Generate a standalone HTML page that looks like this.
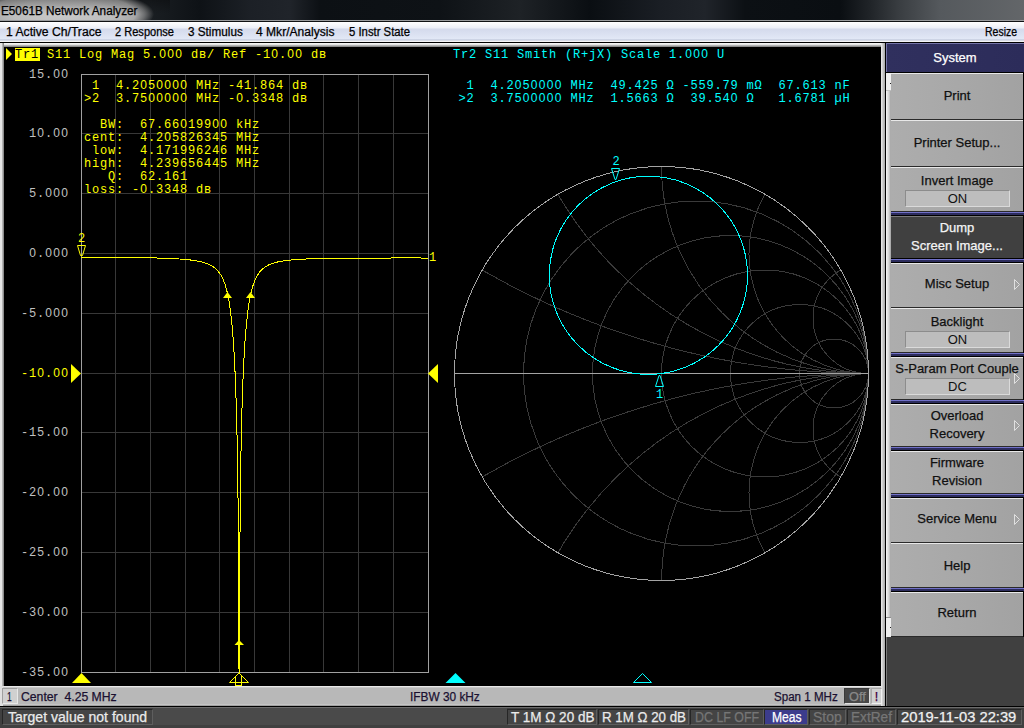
<!DOCTYPE html>
<html><head><meta charset="utf-8">
<style>
*{box-sizing:border-box}
html,body{margin:0;padding:0}
body{width:1024px;height:728px;overflow:hidden;position:relative;background:#000;font-family:"Liberation Sans",sans-serif}
.a{position:absolute}
.t{position:absolute;white-space:nowrap;transform-origin:0 0;-webkit-text-stroke:0.25px currentColor}
#title{left:0;top:0;width:1024px;height:20px;background:linear-gradient(90deg,#1a1e22 150px,#0e1216 200px,#1c2026 250px,#20242a 290px,#0c1014 320px,#0e1216 440px,#1e2226 520px,#0a0e12 590px,#1a1e24 660px,#20242a 705px,#0c1014 745px,#0a0e12 840px,#202428 870px,#3a3e42 900px,#55595d 940px,#636669 1024px)}
#glow{left:0;top:0;width:170px;height:20px;background:linear-gradient(rgba(0,0,0,0.28),rgba(0,0,0,0.05) 55%,rgba(0,0,0,0) 70%),radial-gradient(ellipse 92px 26px at 62px 14px,#cacaca 0%,#bdbdbd 55%,#a8a8a8 80%,rgba(160,160,160,0.6) 90%,rgba(26,30,34,0) 100%)}
#tline{left:0;top:20px;width:1024px;height:2px;background:#9a9c9e;border-bottom:1px solid #101214}
#menu{left:0;top:22px;width:1024px;height:20px;background:linear-gradient(#ffffff 0px,#eceff7 6px,#d4daec 7px,#e2e8f6 17px,#b8c0d4 18px,#f4f4f6 19px)}
#mline{left:0;top:42px;width:1024px;height:1px;background:#000}
#frame{left:0;top:43px;width:885px;height:663px;background:linear-gradient(90deg,#e6e6e6 2px,#b4b4b4 2px,#b4b4b4 3px,#8c8c8c 3px,#8c8c8c 4px,rgba(0,0,0,0) 4px,rgba(0,0,0,0) 881px,#f0f0f0 881px,#d8d8d8 882px,#a8a8a8 885px),linear-gradient(#f4f4f4 1px,#e4e4e4 1px,#e4e4e4 2px,#b4b4b4 2px,#b4b4b4 3px,#8c8c8c 3px,#8c8c8c 4px,#000 4px)}
#plot{left:4px;top:47px;width:877px;height:639px;background:#000}
#chs{left:0;top:686px;width:881px;height:20px;background:linear-gradient(#e8e8e8 1px,#c8c8c8 1px,#c8c8c8 2px,#b8b8b8 2px,#b8b8b8 18px,#c4c4c4 18px,#c4c4c4 19px,#a0a0a0 19px)}
#chsl{left:0;top:686px;width:3px;height:20px;background:#e0e0e0}
#rblack{left:885px;top:42px;width:1px;height:665px;background:#000}
#panel{left:886px;top:43px;width:138px;height:663px;background:#000}
#sys{left:886px;top:43px;width:138px;height:29px;background:linear-gradient(90deg,#30305e,#2c2c5a);border-top:1px solid #7474a8;border-left:1px solid #7474a8}
#strip{left:886px;top:73px;width:5px;height:564px;background:#efefef}
#thumb{left:886px;top:90px;width:5px;height:528px;background:linear-gradient(90deg,#f8f8f8,#d0d0d0 60%,#a0a0a0);border-top:1px solid #c0c0c0;border-bottom:1px solid #909090}
#pdark{left:886px;top:637px;width:138px;height:69px;background:#404040;border-left:1px solid #7a7a7a}
#sline{left:0;top:706px;width:1024px;height:1px;background:#000}
#status{left:0;top:707px;width:1024px;height:21px;background:#404040;border-top:1px solid #6c6c6c}
.m{font-family:"Liberation Mono",monospace;font-size:12px;letter-spacing:0.8px}
.z{font-family:"Liberation Sans",sans-serif;font-size:12px;letter-spacing:0}
.key{position:absolute;left:891px;width:132px;background:linear-gradient(90deg,#adadad,#a8a8a8 50%,#a2a2a2);border-top:1px solid #e8e8e8;border-bottom:1px solid #2a2a2a}
.key.dark{background:#404040;border-top:1px solid #7a7a7a;border-bottom:1px solid #000}
.kl{position:absolute;left:891px;width:132px;text-align:center;font-size:13px;line-height:15px;color:#101010;white-space:nowrap;-webkit-text-stroke:0.25px currentColor}
.kl.dk{color:#f4f4f4}
.val{position:absolute;left:905px;width:105px;height:17px;background:#bdbdbd;border:1px solid #8c8c8c;border-right-color:#dadada;border-bottom-color:#dadada;text-align:center;font-size:13px;line-height:15px;color:#101010}
.sep{position:absolute;left:891px;width:133px;height:3px;background:#2c2c5c;border-top:1px solid #7070c8}
.arr{position:absolute;left:1013px}
svg.p{position:absolute;left:0;top:0}
</style></head><body>
<div id="title" class="a"></div>
<div id="glow" class="a"></div>
<div id="tline" class="a"></div>
<div id="menu" class="a"></div>
<div id="mline" class="a"></div>
<div id="frame" class="a"></div>
<div id="plot" class="a"></div>
<div id="chs" class="a"></div>
<div id="chsl" class="a"></div>
<div id="rblack" class="a"></div>
<div id="panel" class="a"></div>
<div id="sys" class="a"></div>
<div class="t" style="left:886px;top:50px;width:138px;text-align:center;font-size:13px;line-height:15px;color:#fff">System</div>
<div id="strip" class="a"></div>
<div id="thumb" class="a"></div>
<div class="a" style="left:890px;top:83px;width:1px;height:1px;background:#202020"></div>
<div class="a" style="left:890px;top:627px;width:1px;height:1px;background:#202020"></div>
<div class="key" style="top:73px;height:47px"></div>
<div class="kl" style="top:88px">Print</div>
<div class="key" style="top:120px;height:47px"></div>
<div class="kl" style="top:135px">Printer Setup...</div>
<div class="key" style="top:167px;height:45px"></div>
<div class="kl" style="top:173px">Invert Image</div>
<div class="val" style="top:190px">ON</div>
<div class="key dark" style="top:216px;height:43px"></div>
<div class="sep" style="top:212px"></div>
<div class="kl dk" style="top:220px">Dump</div>
<div class="kl dk" style="top:238px">Screen Image...</div>
<div class="key" style="top:263px;height:45px"></div>
<div class="sep" style="top:259px"></div>
<div class="kl" style="top:276px">Misc Setup</div>
<svg class="arr" style="top:279px" width="8" height="12"><path d="M1.5 0.5L6.5 5.5L1.5 10.5Z" fill="none" stroke="#e0e0e0"/></svg>
<div class="key" style="top:308px;height:45px"></div>
<div class="kl" style="top:314px">Backlight</div>
<div class="val" style="top:331px">ON</div>
<div class="key" style="top:357px;height:43px"></div>
<div class="sep" style="top:353px"></div>
<div class="kl" style="top:361px">S-Param Port Couple</div>
<div class="val" style="top:378px">DC</div>
<svg class="arr" style="top:373px" width="8" height="12"><path d="M1.5 0.5L6.5 5.5L1.5 10.5Z" fill="none" stroke="#e0e0e0"/></svg>
<div class="key" style="top:404px;height:43px"></div>
<div class="sep" style="top:400px"></div>
<div class="kl" style="top:408px">Overload</div>
<div class="kl" style="top:426px">Recovery</div>
<svg class="arr" style="top:420px" width="8" height="12"><path d="M1.5 0.5L6.5 5.5L1.5 10.5Z" fill="none" stroke="#e0e0e0"/></svg>
<div class="key" style="top:451px;height:43px"></div>
<div class="sep" style="top:447px"></div>
<div class="kl" style="top:455px">Firmware</div>
<div class="kl" style="top:473px">Revision</div>
<div class="key" style="top:498px;height:45px"></div>
<div class="sep" style="top:494px"></div>
<div class="kl" style="top:511px">Service Menu</div>
<svg class="arr" style="top:514px" width="8" height="12"><path d="M1.5 0.5L6.5 5.5L1.5 10.5Z" fill="none" stroke="#e0e0e0"/></svg>
<div class="key" style="top:543px;height:45px"></div>
<div class="kl" style="top:558px">Help</div>
<div class="key" style="top:592px;height:45px"></div>
<div class="sep" style="top:588px"></div>
<div class="kl" style="top:605px">Return</div>
<div id="pdark" class="a"></div>
<div id="sline" class="a"></div>
<div id="status" class="a"></div>
<div class="a" style="left:153px;top:708px;width:354px;height:17px;background:#4a4a4a"></div>
<div class="a" style="left:2px;top:688px;width:16px;height:16px;background:#d0d0d0;border:1px solid #a0a0a0;border-right-color:#e8e8e8;border-bottom-color:#e8e8e8"></div>
<div class="a" style="left:844px;top:688px;width:26px;height:16px;background:#484848;border:1px solid #3a3a3a;border-right-color:#e0e0e0;border-bottom-color:#e0e0e0"></div>
<div class="a" style="left:871px;top:688px;width:11px;height:16px;background:#d0d0d0;border:1px solid #a8a8a8;border-right-color:#f0f0f0;border-bottom-color:#f0f0f0"></div>
<div class="a" style="left:2px;top:709px;width:151px;height:16px;background:#444;border:1px solid #262626;border-right-color:#5e5e5e;border-bottom-color:#5e5e5e"></div>
<div class="a" style="left:507px;top:709px;width:90px;height:16px;background:#444;border:1px solid #262626;border-right-color:#5e5e5e;border-bottom-color:#5e5e5e"></div>
<div class="a" style="left:598px;top:709px;width:91px;height:16px;background:#444;border:1px solid #262626;border-right-color:#5e5e5e;border-bottom-color:#5e5e5e"></div>
<div class="a" style="left:690px;top:709px;width:74px;height:16px;background:#444;border:1px solid #262626;border-right-color:#5e5e5e;border-bottom-color:#5e5e5e"></div>
<div class="a" style="left:764px;top:709px;width:44px;height:16px;background:#3c3c8c;border:1px solid #262626;border-right-color:#5e5e5e;border-bottom-color:#5e5e5e"></div>
<div class="a" style="left:809px;top:709px;width:37px;height:16px;background:#444;border:1px solid #262626;border-right-color:#5e5e5e;border-bottom-color:#5e5e5e"></div>
<div class="a" style="left:847px;top:709px;width:49px;height:16px;background:#444;border:1px solid #262626;border-right-color:#5e5e5e;border-bottom-color:#5e5e5e"></div>
<div class="a" style="left:897px;top:709px;width:125px;height:16px;background:#444;border:1px solid #262626;border-right-color:#5e5e5e;border-bottom-color:#5e5e5e"></div>
<div class="t" style="left:0.50px;top:4.29px;font-size:12px;line-height:14px;color:#000;transform:scaleX(0.9789);">E5061B Network Analyzer</div>
<div class="t" style="left:5.50px;top:25.29px;font-size:12px;line-height:14px;color:#000;transform:scaleX(1.0132);">1 Active Ch/Trace</div>
<div class="t" style="left:115.00px;top:25.29px;font-size:12px;line-height:14px;color:#000;transform:scaleX(0.9216);">2 Response</div>
<div class="t" style="left:188.00px;top:25.29px;font-size:12px;line-height:14px;color:#000;transform:scaleX(0.9779);">3 Stimulus</div>
<div class="t" style="left:256.00px;top:25.29px;font-size:12px;line-height:14px;color:#000;transform:scaleX(1.0051);">4 Mkr/Analysis</div>
<div class="t" style="left:349.00px;top:25.29px;font-size:12px;line-height:14px;color:#000;transform:scaleX(0.9431);">5 Instr State</div>
<div class="t" style="left:985.00px;top:25.29px;font-size:12px;line-height:14px;color:#000;transform:scaleX(0.8729);">Resize</div>
<div class="t" style="left:7.00px;top:689.97px;font-size:12.5px;line-height:15px;color:#1a1030;transform:scaleX(0.6775);">1</div>
<div class="t" style="left:21.10px;top:689.97px;font-size:12.5px;line-height:15px;color:#1a1030;transform:scaleX(0.9772);">Center  4.25 MHz</div>
<div class="t" style="left:410.30px;top:689.97px;font-size:12.5px;line-height:15px;color:#1a1030;transform:scaleX(0.9480);">IFBW 30 kHz</div>
<div class="t" style="left:774.30px;top:689.97px;font-size:12.5px;line-height:15px;color:#1a1030;transform:scaleX(0.9272);">Span 1 MHz</div>
<div class="t" style="left:848.60px;top:689.97px;font-size:12.5px;line-height:15px;color:#8a8a8a;transform:scaleX(1.0182);">Off</div>
<div class="t" style="left:874.50px;top:689.97px;font-size:12.5px;line-height:15px;color:#400040;transform:scaleX(0.7143);font-weight:bold;">!</div>
<div class="t" style="left:7.80px;top:708.50px;font-size:14px;line-height:17px;color:#eaeaea;transform:scaleX(1.0041);">Target value not found</div>
<div class="t" style="left:510.70px;top:708.50px;font-size:14px;line-height:17px;color:#eaeaea;transform:scaleX(0.9647);">T 1M Ω 20 dB</div>
<div class="t" style="left:601.60px;top:708.50px;font-size:14px;line-height:17px;color:#eaeaea;transform:scaleX(0.9505);">R 1M Ω 20 dB</div>
<div class="t" style="left:694.50px;top:708.50px;font-size:14px;line-height:17px;color:#767676;transform:scaleX(0.8878);">DC LF OFF</div>
<div class="t" style="left:771.60px;top:708.50px;font-size:14px;line-height:17px;color:#ffffff;transform:scaleX(0.8647);">Meas</div>
<div class="t" style="left:813.00px;top:708.50px;font-size:14px;line-height:17px;color:#767676;transform:scaleX(1.0010);">Stop</div>
<div class="t" style="left:851.00px;top:708.50px;font-size:14px;line-height:17px;color:#767676;transform:scaleX(0.9746);">ExtRef</div>
<div class="t" style="left:901.10px;top:708.50px;font-size:14px;line-height:17px;color:#f0f0f0;transform:scaleX(1.0532);">2019-11-03 22:39</div>
<svg class="p" width="1024" height="728" viewBox="0 0 1024 728">
<path d="M115.5 74V672M81 133.5H428M150.5 74V672M81 193.5H428M185.5 74V672M81 253.5H428M219.5 74V672M81 313.5H428M254.5 74V672M81 373.5H428M289.5 74V672M81 432.5H428M323.5 74V672M81 492.5H428M358.5 74V672M81 552.5H428M393.5 74V672M81 612.5H428" stroke="#383838" stroke-width="1" fill="none"/>
<rect x="81.5" y="74.5" width="347" height="598" stroke="#a0a0a0" fill="none"/>
<text y="78" fill="#c0c0c0" class="m" xml:space="preserve"><tspan x="29.00">15.</tspan><tspan class="z" x="53.30">0</tspan><tspan class="z" x="61.30">0</tspan></text>
<text y="137" fill="#c0c0c0" class="m" xml:space="preserve"><tspan x="29.00">1</tspan><tspan class="z" x="37.30">0</tspan><tspan x="45.00">.</tspan><tspan class="z" x="53.30">0</tspan><tspan class="z" x="61.30">0</tspan></text>
<text y="197" fill="#c0c0c0" class="m" xml:space="preserve"><tspan x="29.00">5.</tspan><tspan class="z" x="45.30">0</tspan><tspan class="z" x="53.30">0</tspan><tspan class="z" x="61.30">0</tspan></text>
<text y="257" fill="#c0c0c0" class="m" xml:space="preserve"><tspan class="z" x="29.30">0</tspan><tspan x="37.00">.</tspan><tspan class="z" x="45.30">0</tspan><tspan class="z" x="53.30">0</tspan><tspan class="z" x="61.30">0</tspan></text>
<text y="317" fill="#c0c0c0" class="m" xml:space="preserve"><tspan x="21.00">-5.</tspan><tspan class="z" x="45.30">0</tspan><tspan class="z" x="53.30">0</tspan><tspan class="z" x="61.30">0</tspan></text>
<text y="377" fill="#ffff00" class="m" xml:space="preserve"><tspan x="21.00">-1</tspan><tspan class="z" x="37.30">0</tspan><tspan x="45.00">.</tspan><tspan class="z" x="53.30">0</tspan><tspan class="z" x="61.30">0</tspan></text>
<text y="436" fill="#c0c0c0" class="m" xml:space="preserve"><tspan x="21.00">-15.</tspan><tspan class="z" x="53.30">0</tspan><tspan class="z" x="61.30">0</tspan></text>
<text y="496" fill="#c0c0c0" class="m" xml:space="preserve"><tspan x="21.00">-2</tspan><tspan class="z" x="37.30">0</tspan><tspan x="45.00">.</tspan><tspan class="z" x="53.30">0</tspan><tspan class="z" x="61.30">0</tspan></text>
<text y="556" fill="#c0c0c0" class="m" xml:space="preserve"><tspan x="21.00">-25.</tspan><tspan class="z" x="53.30">0</tspan><tspan class="z" x="61.30">0</tspan></text>
<text y="616" fill="#c0c0c0" class="m" xml:space="preserve"><tspan x="21.00">-3</tspan><tspan class="z" x="37.30">0</tspan><tspan x="45.00">.</tspan><tspan class="z" x="53.30">0</tspan><tspan class="z" x="61.30">0</tspan></text>
<text y="676" fill="#c0c0c0" class="m" xml:space="preserve"><tspan x="21.00">-35.</tspan><tspan class="z" x="53.30">0</tspan><tspan class="z" x="61.30">0</tspan></text>
<clipPath id="gc"><rect x="81" y="74" width="348" height="599"/></clipPath>
<path clip-path="url(#gc)" d="M81.00 257.01 L81.22 257.01 L81.43 257.01 L81.65 257.01 L81.87 257.01 L82.08 257.01 L82.30 257.02 L82.52 257.02 L82.73 257.02 L82.95 257.02 L83.17 257.02 L83.39 257.02 L83.60 257.02 L83.82 257.03 L84.04 257.03 L84.25 257.03 L84.47 257.03 L84.69 257.03 L84.90 257.03 L85.12 257.03 L85.34 257.04 L85.55 257.04 L85.77 257.04 L85.99 257.04 L86.21 257.04 L86.42 257.04 L86.64 257.05 L86.86 257.05 L87.07 257.05 L87.29 257.05 L87.51 257.05 L87.72 257.05 L87.94 257.05 L88.16 257.06 L88.37 257.06 L88.59 257.06 L88.81 257.06 L89.02 257.06 L89.24 257.06 L89.46 257.07 L89.67 257.07 L89.89 257.07 L90.11 257.07 L90.33 257.07 L90.54 257.07 L90.76 257.08 L90.98 257.08 L91.19 257.08 L91.41 257.08 L91.63 257.08 L91.84 257.08 L92.06 257.09 L92.28 257.09 L92.49 257.09 L92.71 257.09 L92.93 257.09 L93.15 257.09 L93.36 257.10 L93.58 257.10 L93.80 257.10 L94.01 257.10 L94.23 257.10 L94.45 257.10 L94.66 257.11 L94.88 257.11 L95.10 257.11 L95.31 257.11 L95.53 257.11 L95.75 257.11 L95.96 257.12 L96.18 257.12 L96.40 257.12 L96.61 257.12 L96.83 257.12 L97.05 257.12 L97.27 257.13 L97.48 257.13 L97.70 257.13 L97.92 257.13 L98.13 257.13 L98.35 257.13 L98.57 257.14 L98.78 257.14 L99.00 257.14 L99.22 257.14 L99.43 257.14 L99.65 257.15 L99.87 257.15 L100.09 257.15 L100.30 257.15 L100.52 257.15 L100.74 257.15 L100.95 257.16 L101.17 257.16 L101.39 257.16 L101.60 257.16 L101.82 257.16 L102.04 257.17 L102.25 257.17 L102.47 257.17 L102.69 257.17 L102.90 257.17 L103.12 257.18 L103.34 257.18 L103.55 257.18 L103.77 257.18 L103.99 257.18 L104.21 257.18 L104.42 257.19 L104.64 257.19 L104.86 257.19 L105.07 257.19 L105.29 257.19 L105.51 257.20 L105.72 257.20 L105.94 257.20 L106.16 257.20 L106.37 257.20 L106.59 257.21 L106.81 257.21 L107.03 257.21 L107.24 257.21 L107.46 257.21 L107.68 257.22 L107.89 257.22 L108.11 257.22 L108.33 257.22 L108.54 257.22 L108.76 257.23 L108.98 257.23 L109.19 257.23 L109.41 257.23 L109.63 257.24 L109.84 257.24 L110.06 257.24 L110.28 257.24 L110.49 257.24 L110.71 257.25 L110.93 257.25 L111.15 257.25 L111.36 257.25 L111.58 257.25 L111.80 257.26 L112.01 257.26 L112.23 257.26 L112.45 257.26 L112.66 257.27 L112.88 257.27 L113.10 257.27 L113.31 257.27 L113.53 257.27 L113.75 257.28 L113.97 257.28 L114.18 257.28 L114.40 257.28 L114.62 257.29 L114.83 257.29 L115.05 257.29 L115.27 257.29 L115.48 257.29 L115.70 257.30 L115.92 257.30 L116.13 257.30 L116.35 257.30 L116.57 257.31 L116.78 257.31 L117.00 257.31 L117.22 257.31 L117.44 257.32 L117.65 257.32 L117.87 257.32 L118.09 257.32 L118.30 257.33 L118.52 257.33 L118.74 257.33 L118.95 257.33 L119.17 257.34 L119.39 257.34 L119.60 257.34 L119.82 257.34 L120.04 257.35 L120.25 257.35 L120.47 257.35 L120.69 257.35 L120.91 257.36 L121.12 257.36 L121.34 257.36 L121.56 257.36 L121.77 257.37 L121.99 257.37 L122.21 257.37 L122.42 257.37 L122.64 257.38 L122.86 257.38 L123.07 257.38 L123.29 257.38 L123.51 257.39 L123.72 257.39 L123.94 257.39 L124.16 257.39 L124.38 257.40 L124.59 257.40 L124.81 257.40 L125.03 257.41 L125.24 257.41 L125.46 257.41 L125.68 257.41 L125.89 257.42 L126.11 257.42 L126.33 257.42 L126.54 257.42 L126.76 257.43 L126.98 257.43 L127.19 257.43 L127.41 257.44 L127.63 257.44 L127.84 257.44 L128.06 257.44 L128.28 257.45 L128.50 257.45 L128.71 257.45 L128.93 257.46 L129.15 257.46 L129.36 257.46 L129.58 257.47 L129.80 257.47 L130.01 257.47 L130.23 257.47 L130.45 257.48 L130.66 257.48 L130.88 257.48 L131.10 257.49 L131.31 257.49 L131.53 257.49 L131.75 257.50 L131.97 257.50 L132.18 257.50 L132.40 257.51 L132.62 257.51 L132.83 257.51 L133.05 257.52 L133.27 257.52 L133.48 257.52 L133.70 257.53 L133.92 257.53 L134.13 257.53 L134.35 257.54 L134.57 257.54 L134.78 257.54 L135.00 257.55 L135.22 257.55 L135.44 257.55 L135.65 257.56 L135.87 257.56 L136.09 257.56 L136.30 257.57 L136.52 257.57 L136.74 257.57 L136.95 257.58 L137.17 257.58 L137.39 257.58 L137.60 257.59 L137.82 257.59 L138.04 257.59 L138.25 257.60 L138.47 257.60 L138.69 257.61 L138.91 257.61 L139.12 257.61 L139.34 257.62 L139.56 257.62 L139.77 257.62 L139.99 257.63 L140.21 257.63 L140.42 257.64 L140.64 257.64 L140.86 257.64 L141.07 257.65 L141.29 257.65 L141.51 257.66 L141.72 257.66 L141.94 257.66 L142.16 257.67 L142.38 257.67 L142.59 257.68 L142.81 257.68 L143.03 257.68 L143.24 257.69 L143.46 257.69 L143.68 257.70 L143.89 257.70 L144.11 257.71 L144.33 257.71 L144.54 257.71 L144.76 257.72 L144.98 257.72 L145.20 257.73 L145.41 257.73 L145.63 257.74 L145.85 257.74 L146.06 257.74 L146.28 257.75 L146.50 257.75 L146.71 257.76 L146.93 257.76 L147.15 257.77 L147.36 257.77 L147.58 257.78 L147.80 257.78 L148.01 257.79 L148.23 257.79 L148.45 257.80 L148.66 257.80 L148.88 257.80 L149.10 257.81 L149.32 257.81 L149.53 257.82 L149.75 257.82 L149.97 257.83 L150.18 257.83 L150.40 257.84 L150.62 257.84 L150.83 257.85 L151.05 257.85 L151.27 257.86 L151.48 257.87 L151.70 257.87 L151.92 257.88 L152.14 257.88 L152.35 257.89 L152.57 257.89 L152.79 257.90 L153.00 257.90 L153.22 257.91 L153.44 257.91 L153.65 257.92 L153.87 257.92 L154.09 257.93 L154.30 257.94 L154.52 257.94 L154.74 257.95 L154.95 257.95 L155.17 257.96 L155.39 257.96 L155.60 257.97 L155.82 257.98 L156.04 257.98 L156.26 257.99 L156.47 257.99 L156.69 258.00 L156.91 258.01 L157.12 258.01 L157.34 258.02 L157.56 258.03 L157.77 258.03 L157.99 258.04 L158.21 258.04 L158.42 258.05 L158.64 258.06 L158.86 258.06 L159.08 258.07 L159.29 258.08 L159.51 258.08 L159.73 258.09 L159.94 258.10 L160.16 258.10 L160.38 258.11 L160.59 258.12 L160.81 258.12 L161.03 258.13 L161.24 258.14 L161.46 258.15 L161.68 258.15 L161.89 258.16 L162.11 258.17 L162.33 258.18 L162.54 258.18 L162.76 258.19 L162.98 258.20 L163.20 258.21 L163.41 258.21 L163.63 258.22 L163.85 258.23 L164.06 258.24 L164.28 258.24 L164.50 258.25 L164.71 258.26 L164.93 258.27 L165.15 258.28 L165.36 258.28 L165.58 258.29 L165.80 258.30 L166.02 258.31 L166.23 258.32 L166.45 258.33 L166.67 258.34 L166.88 258.34 L167.10 258.35 L167.32 258.36 L167.53 258.37 L167.75 258.38 L167.97 258.39 L168.18 258.40 L168.40 258.41 L168.62 258.42 L168.83 258.43 L169.05 258.43 L169.27 258.44 L169.48 258.45 L169.70 258.46 L169.92 258.47 L170.14 258.48 L170.35 258.49 L170.57 258.50 L170.79 258.51 L171.00 258.52 L171.22 258.53 L171.44 258.54 L171.65 258.55 L171.87 258.56 L172.09 258.58 L172.30 258.59 L172.52 258.60 L172.74 258.61 L172.95 258.62 L173.17 258.63 L173.39 258.64 L173.61 258.65 L173.82 258.66 L174.04 258.68 L174.26 258.69 L174.47 258.70 L174.69 258.71 L174.91 258.72 L175.12 258.73 L175.34 258.75 L175.56 258.76 L175.77 258.77 L175.99 258.78 L176.21 258.80 L176.43 258.81 L176.64 258.82 L176.86 258.84 L177.08 258.85 L177.29 258.86 L177.51 258.88 L177.73 258.89 L177.94 258.90 L178.16 258.92 L178.38 258.93 L178.59 258.94 L178.81 258.96 L179.03 258.97 L179.24 258.99 L179.46 259.00 L179.68 259.02 L179.90 259.03 L180.11 259.05 L180.33 259.06 L180.55 259.08 L180.76 259.09 L180.98 259.11 L181.20 259.13 L181.41 259.14 L181.63 259.16 L181.85 259.17 L182.06 259.19 L182.28 259.21 L182.50 259.23 L182.71 259.24 L182.93 259.26 L183.15 259.28 L183.36 259.29 L183.58 259.31 L183.80 259.33 L184.02 259.35 L184.23 259.37 L184.45 259.39 L184.67 259.41 L184.88 259.42 L185.10 259.44 L185.32 259.46 L185.53 259.48 L185.75 259.50 L185.97 259.52 L186.18 259.54 L186.40 259.57 L186.62 259.59 L186.83 259.61 L187.05 259.63 L187.27 259.65 L187.49 259.67 L187.70 259.69 L187.92 259.72 L188.14 259.74 L188.35 259.76 L188.57 259.79 L188.79 259.81 L189.00 259.83 L189.22 259.86 L189.44 259.88 L189.65 259.91 L189.87 259.93 L190.09 259.96 L190.31 259.98 L190.52 260.01 L190.74 260.04 L190.96 260.06 L191.17 260.09 L191.39 260.12 L191.61 260.15 L191.82 260.17 L192.04 260.20 L192.26 260.23 L192.47 260.26 L192.69 260.29 L192.91 260.32 L193.12 260.35 L193.34 260.38 L193.56 260.41 L193.78 260.44 L193.99 260.48 L194.21 260.51 L194.43 260.54 L194.64 260.58 L194.86 260.61 L195.08 260.64 L195.29 260.68 L195.51 260.71 L195.73 260.75 L195.94 260.79 L196.16 260.82 L196.38 260.86 L196.59 260.90 L196.81 260.94 L197.03 260.98 L197.25 261.01 L197.46 261.05 L197.68 261.10 L197.90 261.14 L198.11 261.18 L198.33 261.22 L198.55 261.26 L198.76 261.31 L198.98 261.35 L199.20 261.40 L199.41 261.44 L199.63 261.49 L199.85 261.54 L200.06 261.59 L200.28 261.64 L200.50 261.68 L200.71 261.74 L200.93 261.79 L201.15 261.84 L201.37 261.89 L201.58 261.94 L201.80 262.00 L202.02 262.05 L202.23 262.11 L202.45 262.17 L202.67 262.23 L202.88 262.29 L203.10 262.35 L203.32 262.41 L203.53 262.47 L203.75 262.53 L203.97 262.60 L204.19 262.66 L204.40 262.73 L204.62 262.80 L204.84 262.87 L205.05 262.94 L205.27 263.01 L205.49 263.08 L205.70 263.15 L205.92 263.23 L206.14 263.31 L206.35 263.38 L206.57 263.46 L206.79 263.55 L207.00 263.63 L207.22 263.71 L207.44 263.80 L207.66 263.88 L207.87 263.97 L208.09 264.06 L208.31 264.16 L208.52 264.25 L208.74 264.35 L208.96 264.44 L209.17 264.54 L209.39 264.65 L209.61 264.75 L209.82 264.86 L210.04 264.96 L210.26 265.07 L210.47 265.19 L210.69 265.30 L210.91 265.42 L211.12 265.54 L211.34 265.66 L211.56 265.78 L211.78 265.91 L211.99 266.04 L212.21 266.17 L212.43 266.31 L212.64 266.45 L212.86 266.59 L213.08 266.74 L213.29 266.88 L213.51 267.03 L213.73 267.19 L213.94 267.35 L214.16 267.51 L214.38 267.68 L214.59 267.85 L214.81 268.02 L215.03 268.20 L215.25 268.38 L215.46 268.56 L215.68 268.75 L215.90 268.95 L216.11 269.15 L216.33 269.36 L216.55 269.57 L216.76 269.78 L216.98 270.00 L217.20 270.23 L217.41 270.46 L217.63 270.70 L217.85 270.94 L218.06 271.19 L218.28 271.45 L218.50 271.71 L218.72 271.98 L218.93 272.26 L219.15 272.55 L219.37 272.84 L219.58 273.14 L219.80 273.45 L220.02 273.77 L220.23 274.10 L220.45 274.43 L220.67 274.78 L220.88 275.14 L221.10 275.50 L221.32 275.88 L221.54 276.27 L221.75 276.67 L221.97 277.08 L222.19 277.51 L222.40 277.94 L222.62 278.39 L222.84 278.86 L223.05 279.34 L223.27 279.83 L223.49 280.34 L223.70 280.87 L223.92 281.41 L224.14 281.97 L224.35 282.55 L224.57 283.15 L224.79 283.77 L225.01 284.41 L225.22 285.07 L225.44 285.75 L225.66 286.46 L225.87 287.19 L226.09 287.95 L226.31 288.74 L226.52 289.55 L226.74 290.39 L226.96 291.27 L227.17 292.17 L227.39 293.11 L227.61 294.08 L227.82 295.10 L228.04 296.15 L228.26 297.24 L228.47 298.37 L228.69 299.55 L228.91 300.77 L229.13 302.05 L229.34 303.37 L229.56 304.75 L229.78 306.19 L229.99 307.69 L230.21 309.25 L230.43 310.88 L230.64 312.57 L230.86 314.35 L231.08 316.20 L231.29 318.14 L231.51 320.16 L231.73 322.28 L231.94 324.49 L232.16 326.82 L232.38 329.25 L232.60 331.80 L232.81 334.49 L233.03 337.30 L233.25 340.27 L233.46 343.39 L233.68 346.68 L233.90 350.15 L234.11 353.81 L234.33 357.69 L234.55 361.80 L234.76 366.16 L234.98 370.79 L235.20 375.73 L235.42 381.01 L235.63 386.66 L235.85 392.72 L236.07 399.26 L236.28 406.34 L236.50 414.03 L236.72 422.44 L236.93 431.69 L237.15 441.95 L237.37 453.44 L237.58 466.47 L237.80 481.47 L238.02 499.11 L238.23 520.44 L238.45 547.36 L238.67 583.61 L238.89 638.48 L239.10 690.00 L239.32 690.00 L239.54 615.69 L239.75 569.22 L239.97 536.94 L240.19 512.32 L240.40 492.47 L240.62 475.87 L240.84 461.63 L241.05 449.20 L241.27 438.17 L241.49 428.30 L241.70 419.36 L241.92 411.22 L242.14 403.76 L242.35 396.89 L242.57 390.53 L242.79 384.62 L243.01 379.11 L243.22 373.96 L243.44 369.13 L243.66 364.60 L243.87 360.33 L244.09 356.31 L244.31 352.51 L244.52 348.92 L244.74 345.52 L244.96 342.29 L245.17 339.23 L245.39 336.32 L245.61 333.55 L245.82 330.92 L246.04 328.41 L246.26 326.02 L246.48 323.74 L246.69 321.56 L246.91 319.48 L247.13 317.48 L247.34 315.58 L247.56 313.76 L247.78 312.01 L247.99 310.34 L248.21 308.74 L248.43 307.20 L248.64 305.73 L248.86 304.31 L249.08 302.95 L249.30 301.65 L249.51 300.39 L249.73 299.19 L249.95 298.03 L250.16 296.91 L250.38 295.84 L250.60 294.80 L250.81 293.80 L251.03 292.84 L251.25 291.92 L251.46 291.03 L251.68 290.17 L251.90 289.34 L252.11 288.53 L252.33 287.76 L252.55 287.01 L252.77 286.29 L252.98 285.59 L253.20 284.92 L253.42 284.27 L253.63 283.64 L253.85 283.03 L254.07 282.44 L254.28 281.86 L254.50 281.31 L254.72 280.77 L254.93 280.26 L255.15 279.75 L255.37 279.27 L255.58 278.79 L255.80 278.33 L256.02 277.89 L256.23 277.46 L256.45 277.04 L256.67 276.63 L256.89 276.24 L257.10 275.86 L257.32 275.48 L257.54 275.12 L257.75 274.77 L257.97 274.43 L258.19 274.10 L258.40 273.77 L258.62 273.46 L258.84 273.16 L259.05 272.86 L259.27 272.57 L259.49 272.29 L259.70 272.01 L259.92 271.75 L260.14 271.49 L260.36 271.23 L260.57 270.99 L260.79 270.75 L261.01 270.51 L261.22 270.28 L261.44 270.06 L261.66 269.84 L261.87 269.63 L262.09 269.42 L262.31 269.22 L262.52 269.03 L262.74 268.83 L262.96 268.65 L263.18 268.46 L263.39 268.28 L263.61 268.11 L263.83 267.94 L264.04 267.77 L264.26 267.61 L264.48 267.45 L264.69 267.29 L264.91 267.14 L265.13 266.99 L265.34 266.85 L265.56 266.70 L265.78 266.56 L265.99 266.43 L266.21 266.29 L266.43 266.16 L266.65 266.04 L266.86 265.91 L267.08 265.79 L267.30 265.67 L267.51 265.55 L267.73 265.44 L267.95 265.32 L268.16 265.21 L268.38 265.11 L268.60 265.00 L268.81 264.90 L269.03 264.79 L269.25 264.70 L269.46 264.60 L269.68 264.50 L269.90 264.41 L270.12 264.32 L270.33 264.23 L270.55 264.14 L270.77 264.05 L270.98 263.96 L271.20 263.88 L271.42 263.80 L271.63 263.72 L271.85 263.64 L272.07 263.56 L272.28 263.48 L272.50 263.41 L272.72 263.34 L272.93 263.26 L273.15 263.19 L273.37 263.12 L273.58 263.06 L273.80 262.99 L274.02 262.92 L274.24 262.86 L274.45 262.79 L274.67 262.73 L274.89 262.67 L275.10 262.61 L275.32 262.55 L275.54 262.49 L275.75 262.43 L275.97 262.38 L276.19 262.32 L276.40 262.27 L276.62 262.21 L276.84 262.16 L277.05 262.11 L277.27 262.06 L277.49 262.01 L277.71 261.96 L277.92 261.91 L278.14 261.86 L278.36 261.81 L278.57 261.77 L278.79 261.72 L279.01 261.68 L279.22 261.63 L279.44 261.59 L279.66 261.55 L279.87 261.50 L280.09 261.46 L280.31 261.42 L280.53 261.38 L280.74 261.34 L280.96 261.30 L281.18 261.26 L281.39 261.22 L281.61 261.19 L281.83 261.15 L282.04 261.11 L282.26 261.08 L282.48 261.04 L282.69 261.01 L282.91 260.97 L283.13 260.94 L283.34 260.91 L283.56 260.87 L283.78 260.84 L284.00 260.81 L284.21 260.78 L284.43 260.75 L284.65 260.72 L284.86 260.69 L285.08 260.66 L285.30 260.63 L285.51 260.60 L285.73 260.57 L285.95 260.54 L286.16 260.51 L286.38 260.49 L286.60 260.46 L286.81 260.43 L287.03 260.41 L287.25 260.38 L287.46 260.35 L287.68 260.33 L287.90 260.30 L288.12 260.28 L288.33 260.26 L288.55 260.23 L288.77 260.21 L288.98 260.18 L289.20 260.16 L289.42 260.14 L289.63 260.12 L289.85 260.09 L290.07 260.07 L290.28 260.05 L290.50 260.03 L290.72 260.01 L290.94 259.99 L291.15 259.97 L291.37 259.95 L291.59 259.93 L291.80 259.91 L292.02 259.89 L292.24 259.87 L292.45 259.85 L292.67 259.83 L292.89 259.81 L293.10 259.79 L293.32 259.77 L293.54 259.76 L293.75 259.74 L293.97 259.72 L294.19 259.70 L294.41 259.69 L294.62 259.67 L294.84 259.65 L295.06 259.64 L295.27 259.62 L295.49 259.60 L295.71 259.59 L295.92 259.57 L296.14 259.56 L296.36 259.54 L296.57 259.53 L296.79 259.51 L297.01 259.50 L297.22 259.48 L297.44 259.47 L297.66 259.45 L297.88 259.44 L298.09 259.42 L298.31 259.41 L298.53 259.40 L298.74 259.38 L298.96 259.37 L299.18 259.36 L299.39 259.34 L299.61 259.33 L299.83 259.32 L300.04 259.30 L300.26 259.29 L300.48 259.28 L300.69 259.27 L300.91 259.26 L301.13 259.24 L301.34 259.23 L301.56 259.22 L301.78 259.21 L302.00 259.20 L302.21 259.18 L302.43 259.17 L302.65 259.16 L302.86 259.15 L303.08 259.14 L303.30 259.13 L303.51 259.12 L303.73 259.11 L303.95 259.10 L304.16 259.09 L304.38 259.08 L304.60 259.07 L304.81 259.06 L305.03 259.05 L305.25 259.04 L305.47 259.03 L305.68 259.02 L305.90 259.01 L306.12 259.00 L306.33 258.99 L306.55 258.98 L306.77 258.97 L306.98 258.96 L307.20 258.95 L307.42 258.94 L307.63 258.94 L307.85 258.93 L308.07 258.92 L308.29 258.91 L308.50 258.90 L308.72 258.89 L308.94 258.88 L309.15 258.88 L309.37 258.87 L309.59 258.86 L309.80 258.85 L310.02 258.84 L310.24 258.84 L310.45 258.83 L310.67 258.82 L310.89 258.81 L311.10 258.81 L311.32 258.80 L311.54 258.79 L311.75 258.78 L311.97 258.78 L312.19 258.77 L312.41 258.76 L312.62 258.76 L312.84 258.75 L313.06 258.74 L313.27 258.73 L313.49 258.73 L313.71 258.72 L313.92 258.71 L314.14 258.71 L314.36 258.70 L314.57 258.69 L314.79 258.69 L315.01 258.68 L315.22 258.68 L315.44 258.67 L315.66 258.66 L315.88 258.66 L316.09 258.65 L316.31 258.65 L316.53 258.64 L316.74 258.63 L316.96 258.63 L317.18 258.62 L317.39 258.62 L317.61 258.61 L317.83 258.61 L318.04 258.60 L318.26 258.59 L318.48 258.59 L318.70 258.58 L318.91 258.58 L319.13 258.57 L319.35 258.57 L319.56 258.56 L319.78 258.56 L320.00 258.55 L320.21 258.55 L320.43 258.54 L320.65 258.54 L320.86 258.53 L321.08 258.53 L321.30 258.52 L321.51 258.52 L321.73 258.51 L321.95 258.51 L322.17 258.50 L322.38 258.50 L322.60 258.49 L322.82 258.49 L323.03 258.48 L323.25 258.48 L323.47 258.48 L323.68 258.47 L323.90 258.47 L324.12 258.46 L324.33 258.46 L324.55 258.45 L324.77 258.45 L324.98 258.45 L325.20 258.44 L325.42 258.44 L325.63 258.43 L325.85 258.43 L326.07 258.43 L326.29 258.42 L326.50 258.42 L326.72 258.41 L326.94 258.41 L327.15 258.41 L327.37 258.40 L327.59 258.40 L327.80 258.39 L328.02 258.39 L328.24 258.39 L328.45 258.38 L328.67 258.38 L328.89 258.38 L329.10 258.37 L329.32 258.37 L329.54 258.37 L329.76 258.36 L329.97 258.36 L330.19 258.36 L330.41 258.35 L330.62 258.35 L330.84 258.35 L331.06 258.34 L331.27 258.34 L331.49 258.34 L331.71 258.33 L331.92 258.33 L332.14 258.33 L332.36 258.32 L332.57 258.32 L332.79 258.32 L333.01 258.31 L333.23 258.31 L333.44 258.31 L333.66 258.30 L333.88 258.30 L334.09 258.30 L334.31 258.30 L334.53 258.29 L334.74 258.29 L334.96 258.29 L335.18 258.28 L335.39 258.28 L335.61 258.28 L335.83 258.28 L336.05 258.27 L336.26 258.27 L336.48 258.27 L336.70 258.27 L336.91 258.26 L337.13 258.26 L337.35 258.26 L337.56 258.26 L337.78 258.25 L338.00 258.25 L338.21 258.25 L338.43 258.25 L338.65 258.24 L338.86 258.24 L339.08 258.24 L339.30 258.24 L339.52 258.23 L339.73 258.23 L339.95 258.23 L340.17 258.23 L340.38 258.22 L340.60 258.22 L340.82 258.22 L341.03 258.22 L341.25 258.21 L341.47 258.21 L341.68 258.21 L341.90 258.21 L342.12 258.21 L342.33 258.20 L342.55 258.20 L342.77 258.20 L342.98 258.20 L343.20 258.20 L343.42 258.19 L343.64 258.19 L343.85 258.19 L344.07 258.19 L344.29 258.19 L344.50 258.18 L344.72 258.18 L344.94 258.18 L345.15 258.18 L345.37 258.18 L345.59 258.17 L345.80 258.17 L346.02 258.17 L346.24 258.17 L346.45 258.17 L346.67 258.16 L346.89 258.16 L347.11 258.16 L347.32 258.16 L347.54 258.16 L347.76 258.16 L347.97 258.15 L348.19 258.15 L348.41 258.15 L348.62 258.15 L348.84 258.15 L349.06 258.15 L349.27 258.14 L349.49 258.14 L349.71 258.14 L349.93 258.14 L350.14 258.14 L350.36 258.14 L350.58 258.13 L350.79 258.13 L351.01 258.13 L351.23 258.13 L351.44 258.13 L351.66 258.13 L351.88 258.13 L352.09 258.12 L352.31 258.12 L352.53 258.12 L352.74 258.12 L352.96 258.12 L353.18 258.12 L353.40 258.12 L353.61 258.11 L353.83 258.11 L354.05 258.11 L354.26 258.11 L354.48 258.11 L354.70 258.11 L354.91 258.11 L355.13 258.10 L355.35 258.10 L355.56 258.10 L355.78 258.10 L356.00 258.10 L356.21 258.10 L356.43 258.10 L356.65 258.10 L356.86 258.09 L357.08 258.09 L357.30 258.09 L357.52 258.09 L357.73 258.09 L357.95 258.09 L358.17 258.09 L358.38 258.09 L358.60 258.09 L358.82 258.08 L359.03 258.08 L359.25 258.08 L359.47 258.08 L359.68 258.08 L359.90 258.08 L360.12 258.08 L360.33 258.08 L360.55 258.08 L360.77 258.07 L360.99 258.07 L361.20 258.07 L361.42 258.07 L361.64 258.07 L361.85 258.07 L362.07 258.07 L362.29 258.07 L362.50 258.07 L362.72 258.07 L362.94 258.06 L363.15 258.06 L363.37 258.06 L363.59 258.06 L363.80 258.06 L364.02 258.06 L364.24 258.06 L364.46 258.06 L364.67 258.06 L364.89 258.06 L365.11 258.06 L365.32 258.05 L365.54 258.05 L365.76 258.05 L365.97 258.05 L366.19 258.05 L366.41 258.05 L366.62 258.05 L366.84 258.05 L367.06 258.05 L367.28 258.05 L367.49 258.05 L367.71 258.05 L367.93 258.04 L368.14 258.04 L368.36 258.04 L368.58 258.04 L368.79 258.04 L369.01 258.04 L369.23 258.04 L369.44 258.04 L369.66 258.04 L369.88 258.04 L370.09 258.04 L370.31 258.04 L370.53 258.04 L370.75 258.03 L370.96 258.03 L371.18 258.03 L371.40 258.03 L371.61 258.03 L371.83 258.03 L372.05 258.03 L372.26 258.03 L372.48 258.03 L372.70 258.03 L372.91 258.03 L373.13 258.03 L373.35 258.03 L373.56 258.03 L373.78 258.03 L374.00 258.03 L374.21 258.02 L374.43 258.02 L374.65 258.02 L374.87 258.02 L375.08 258.02 L375.30 258.02 L375.52 258.02 L375.73 258.02 L375.95 258.02 L376.17 258.02 L376.38 258.02 L376.60 258.02 L376.82 258.02 L377.03 258.02 L377.25 258.02 L377.47 258.02 L377.69 258.02 L377.90 258.02 L378.12 258.02 L378.34 258.01 L378.55 258.01 L378.77 258.01 L378.99 258.01 L379.20 258.01 L379.42 258.01 L379.64 258.01 L379.85 258.01 L380.07 258.01 L380.29 258.01 L380.50 258.01 L380.72 258.01 L380.94 258.01 L381.16 258.01 L381.37 258.01 L381.59 258.01 L381.81 258.01 L382.02 258.01 L382.24 258.01 L382.46 258.01 L382.67 258.01 L382.89 258.01 L383.11 258.01 L383.32 258.01 L383.54 258.01 L383.76 258.00 L383.97 258.00 L384.19 258.00 L384.41 258.00 L384.62 258.00 L384.84 258.00 L385.06 258.00 L385.28 258.00 L385.49 258.00 L385.71 258.00 L385.93 258.00 L386.14 258.00 L386.36 258.00 L386.58 258.00 L386.79 258.00 L387.01 258.00 L387.23 258.00 L387.44 258.00 L387.66 258.00 L387.88 258.00 L388.09 258.00 L388.31 258.00 L388.53 258.00 L388.75 258.00 L388.96 258.00 L389.18 258.00 L389.40 258.00 L389.61 258.00 L389.83 258.00 L390.05 258.00 L390.26 258.00 L390.48 258.00 L390.70 258.00 L390.91 258.00 L391.13 258.00 L391.35 258.00 L391.56 257.99 L391.78 257.99 L392.00 257.99 L392.22 257.99 L392.43 257.99 L392.65 257.99 L392.87 257.99 L393.08 257.99 L393.30 257.99 L393.52 257.99 L393.73 257.99 L393.95 257.99 L394.17 257.99 L394.38 257.99 L394.60 257.99 L394.82 257.99 L395.04 257.99 L395.25 257.99 L395.47 257.99 L395.69 257.99 L395.90 257.99 L396.12 257.99 L396.34 257.99 L396.55 257.99 L396.77 257.99 L396.99 257.99 L397.20 257.99 L397.42 257.99 L397.64 257.99 L397.85 257.99 L398.07 257.99 L398.29 257.99 L398.50 257.99 L398.72 257.99 L398.94 257.99 L399.16 257.99 L399.37 257.99 L399.59 257.99 L399.81 257.99 L400.02 257.99 L400.24 257.99 L400.46 257.99 L400.67 257.99 L400.89 257.99 L401.11 257.99 L401.32 257.99 L401.54 257.99 L401.76 257.99 L401.97 257.99 L402.19 257.99 L402.41 257.99 L402.63 257.99 L402.84 257.99 L403.06 257.99 L403.28 257.99 L403.49 257.99 L403.71 257.99 L403.93 257.99 L404.14 257.99 L404.36 257.99 L404.58 257.99 L404.79 257.99 L405.01 257.99 L405.23 257.99 L405.45 257.99 L405.66 257.99 L405.88 257.99 L406.10 257.99 L406.31 257.99 L406.53 257.99 L406.75 257.99 L406.96 257.99 L407.18 257.99 L407.40 257.99 L407.61 257.99 L407.83 257.99 L408.05 257.99 L408.26 257.99 L408.48 257.99 L408.70 257.99 L408.92 257.99 L409.13 257.99 L409.35 257.99 L409.57 257.99 L409.78 257.99 L410.00 257.99 L410.22 257.99 L410.43 257.99 L410.65 257.99 L410.87 257.99 L411.08 257.99 L411.30 257.99 L411.52 257.99 L411.73 257.99 L411.95 257.99 L412.17 257.99 L412.39 257.99 L412.60 257.99 L412.82 257.99 L413.04 257.99 L413.25 257.99 L413.47 257.99 L413.69 257.99 L413.90 257.99 L414.12 257.99 L414.34 257.99 L414.55 257.99 L414.77 257.99 L414.99 257.99 L415.20 257.99 L415.42 257.99 L415.64 257.99 L415.85 257.99 L416.07 257.99 L416.29 257.99 L416.51 257.99 L416.72 257.99 L416.94 257.99 L417.16 257.99 L417.37 257.99 L417.59 257.99 L417.81 257.99 L418.02 257.99 L418.24 257.99 L418.46 257.99 L418.67 257.99 L418.89 257.99 L419.11 257.99 L419.32 257.99 L419.54 257.99 L419.76 257.99 L419.98 257.99 L420.19 257.99 L420.41 257.99 L420.63 257.99 L420.84 257.99 L421.06 258.00 L421.28 258.00 L421.49 258.00 L421.71 258.00 L421.93 258.00 L422.14 258.00 L422.36 258.00 L422.58 258.00 L422.80 258.00 L423.01 258.00 L423.23 258.00 L423.45 258.00 L423.66 258.00 L423.88 258.00 L424.10 258.00 L424.31 258.00 L424.53 258.00 L424.75 258.00 L424.96 258.00 L425.18 258.00 L425.40 258.00 L425.61 258.00 L425.83 258.00 L426.05 258.00 L426.27 258.00 L426.48 258.00 L426.70 258.00 L426.92 258.00 L427.13 258.00 L427.35 258.00 L427.57 258.00 L427.78 258.00 L428.00 258.00" stroke="#ffff00" stroke-width="1" fill="none" shape-rendering="crispEdges"/>
<clipPath id="sc"><circle cx="661.5" cy="373.5" r="207"/></clipPath>
<g clip-path="url(#sc)" stroke="#3a3a3a" fill="none" stroke-width="1" shape-rendering="crispEdges"><circle cx="696.00" cy="373.5" r="172.50"/><circle cx="730.50" cy="373.5" r="138.00"/><circle cx="765.00" cy="373.5" r="103.50"/><circle cx="799.50" cy="373.5" r="69.00"/><circle cx="834.00" cy="373.5" r="34.50"/><circle cx="868.5" cy="318.03" r="55.47"/><circle cx="868.5" cy="428.97" r="55.47"/><circle cx="868.5" cy="253.99" r="119.51"/><circle cx="868.5" cy="493.01" r="119.51"/><circle cx="868.5" cy="166.50" r="207.00"/><circle cx="868.5" cy="580.50" r="207.00"/><circle cx="868.5" cy="14.97" r="358.53"/><circle cx="868.5" cy="732.03" r="358.53"/><circle cx="868.5" cy="-399.03" r="772.53"/><circle cx="868.5" cy="1146.03" r="772.53"/></g>
<circle cx="661.5" cy="373.5" r="207" stroke="#a4a4a4" fill="none" shape-rendering="crispEdges"/>
<path d="M454 373.5H868" stroke="#a4a4a4"/>
<circle cx="648.4" cy="275.3" r="99.1" stroke="#00ffff" stroke-width="1" fill="none" shape-rendering="crispEdges"/>
<path d="M6 48L12 54L6 60Z" fill="#ffff00"/>
<rect x="15" y="48" width="25" height="13" fill="#ffff00"/>
<path d="M71 364L81 373.5L71 383Z" fill="#ffff00"/>
<path d="M438 364L428 373.5L438 383Z" fill="#ffff00"/>
<path d="M72 683L81.5 673L91 683Z" fill="#ffff00"/>
<path d="M445.5 683L455.5 673L465.5 683Z" fill="#00ffff"/>
<path d="M633.5 682.5L642.5 673.5L651.5 682.5Z" stroke="#00ffff" fill="none"/>
<path d="M77.5 245.5H85.5L82.5 255.5H80.5Z" stroke="#ffff00" fill="none"/>
<text x="82" y="242" text-anchor="middle" fill="#ffff00" class="m">2</text>
<text x="433" y="261" text-anchor="middle" fill="#ffff00" class="m">1</text>
<path d="M223 298L227.5 292L232 298Z" fill="#ffff00"/>
<path d="M246 298L250.5 292L255 298Z" fill="#ffff00"/>
<path d="M234.5 645L239 640L244 645Z" fill="#ffff00"/>
<path d="M229.5 682.5L239 673L248.5 682.5Z" stroke="#ffff00" fill="none"/>
<path d="M235.5 676V685M241.5 676V685M235 685.5H242" stroke="#ffff00" fill="none"/>
<path d="M611.5 168.5H619.5L616 179.5H615Z" stroke="#00ffff" fill="none"/>
<text x="616.5" y="165" text-anchor="middle" fill="#00ffff" class="m">2</text>
<path d="M659 375.5H660L663.5 386.5H655.5Z" stroke="#00ffff" fill="none"/>
<text x="660" y="398" text-anchor="middle" fill="#00ffff" class="m">1</text>
<text x="15" y="58" fill="#000" class="m">Tr1</text>
<text y="58" fill="#ffff00" class="m" xml:space="preserve"><tspan x="15.00">    S11 Log Mag 5.</tspan><tspan class="z" x="159.30">0</tspan><tspan class="z" x="167.30">0</tspan><tspan class="z" x="175.30">0</tspan><tspan x="183.00"> dʙ/ Ref -1</tspan><tspan class="z" x="271.30">0</tspan><tspan x="279.00">.</tspan><tspan class="z" x="287.30">0</tspan><tspan class="z" x="295.30">0</tspan><tspan x="303.00"> dʙ</tspan></text>
<text y="89" fill="#ffff00" class="m" xml:space="preserve"><tspan x="84.00"> 1  4.2</tspan><tspan class="z" x="140.30">0</tspan><tspan x="148.00">5</tspan><tspan class="z" x="156.30">0</tspan><tspan class="z" x="164.30">0</tspan><tspan class="z" x="172.30">0</tspan><tspan class="z" x="180.30">0</tspan><tspan x="188.00"> MHz -41.864 dʙ</tspan></text>
<text y="102" fill="#ffff00" class="m" xml:space="preserve"><tspan x="84.00">&gt;2  3.75</tspan><tspan class="z" x="148.30">0</tspan><tspan class="z" x="156.30">0</tspan><tspan class="z" x="164.30">0</tspan><tspan class="z" x="172.30">0</tspan><tspan class="z" x="180.30">0</tspan><tspan x="188.00"> MHz -</tspan><tspan class="z" x="236.30">0</tspan><tspan x="244.00">.3348 dʙ</tspan></text>
<text y="128" fill="#ffff00" class="m" xml:space="preserve"><tspan x="84.00">  BW:  67.66</tspan><tspan class="z" x="180.30">0</tspan><tspan x="188.00">199</tspan><tspan class="z" x="212.30">0</tspan><tspan class="z" x="220.30">0</tspan><tspan x="228.00"> kHz</tspan></text>
<text y="141" fill="#ffff00" class="m" xml:space="preserve"><tspan x="84.00">cent:  4.2</tspan><tspan class="z" x="164.30">0</tspan><tspan x="172.00">5826345 MHz</tspan></text>
<text y="154" fill="#ffff00" class="m" xml:space="preserve"><tspan x="84.00"> low:  4.171996246 MHz</tspan></text>
<text y="167" fill="#ffff00" class="m" xml:space="preserve"><tspan x="84.00">high:  4.239656445 MHz</tspan></text>
<text y="180" fill="#ffff00" class="m" xml:space="preserve"><tspan x="84.00">   Q:  62.161</tspan></text>
<text y="193" fill="#ffff00" class="m" xml:space="preserve"><tspan x="84.00">loss: -</tspan><tspan class="z" x="140.30">0</tspan><tspan x="148.00">.3348 dʙ</tspan></text>
<text y="58" fill="#00ffff" class="m" xml:space="preserve"><tspan x="453.00">Tr2 S11 Smith (R+jX) Scale 1.</tspan><tspan class="z" x="685.30">0</tspan><tspan class="z" x="693.30">0</tspan><tspan class="z" x="701.30">0</tspan><tspan x="709.00"> U</tspan></text>
<text y="89" fill="#00ffff" class="m" xml:space="preserve"><tspan x="458.50"> 1  4.2</tspan><tspan class="z" x="514.80">0</tspan><tspan x="522.50">5</tspan><tspan class="z" x="530.80">0</tspan><tspan class="z" x="538.80">0</tspan><tspan class="z" x="546.80">0</tspan><tspan class="z" x="554.80">0</tspan><tspan x="562.50"> MHz  49.425 Ω -559.79 mΩ  67.613 nF</tspan></text>
<text y="102" fill="#00ffff" class="m" xml:space="preserve"><tspan x="458.50">&gt;2  3.75</tspan><tspan class="z" x="522.80">0</tspan><tspan class="z" x="530.80">0</tspan><tspan class="z" x="538.80">0</tspan><tspan class="z" x="546.80">0</tspan><tspan class="z" x="554.80">0</tspan><tspan x="562.50"> MHz  1.5663 Ω  39.54</tspan><tspan class="z" x="730.80">0</tspan><tspan x="738.50"> Ω   1.6781 µH</tspan></text>
</svg>
</body></html>
